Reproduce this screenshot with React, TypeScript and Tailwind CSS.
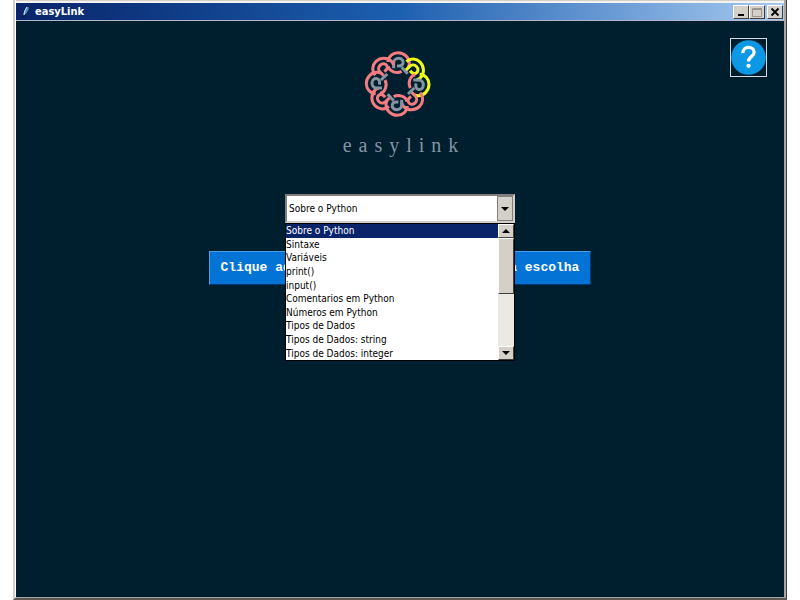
import React, { useState } from "react";

const topics = [
  "Sobre o Python",
  "Sintaxe",
  "Variáveis",
  "print()",
  "input()",
  "Comentarios em Python",
  "Números em Python",
  "Tipos de Dados",
  "Tipos de Dados: string",
  "Tipos de Dados: integer",
];

const PINK = "#f47c80";
const GREY = "#8494a2";
const YELLOW = "#f0fb1c";

// One entry per loop of the knot, clockwise from the top.
const loops = [
  { outer: PINK, hook: GREY, inner: PINK, spoke: GREY },
  { outer: YELLOW, hook: YELLOW, inner: "none", spoke: "none" },
  { outer: YELLOW, hook: GREY, inner: PINK, spoke: GREY },
  { outer: PINK, hook: PINK, inner: "none", spoke: "none" },
  { outer: PINK, hook: GREY, inner: PINK, spoke: GREY },
  { outer: PINK, hook: PINK, inner: "none", spoke: "none" },
  { outer: PINK, hook: GREY, inner: PINK, spoke: GREY },
  { outer: PINK, hook: PINK, inner: "none", spoke: "none" },
];

function KnotLogo() {
  return (
    <svg viewBox="-119 -126 252 252" className="h-[84px] w-[84px]" role="img" aria-label="easylink">
      {loops.map((loop, i) => (
        <g key={i} transform={`rotate(${i * 45})`} fill="none" strokeWidth="9">
          <path d="M-29 -66C-28 -83 -14 -94 1 -94C20 -94 35 -79 35 -62C35 -56 34 -52 31 -48" stroke={loop.outer} />
          <path d="M-12 -47V-63C-12 -72 -5 -77 3 -77C13 -77 18 -69 16 -62C14 -55 8 -53 -2 -55" stroke={loop.hook} />
          <path d="M-28 -53C-25 -37 -3 -30 12 -38" stroke={loop.inner} />
          <path d="M12 -50L30 -31" stroke={loop.spoke} />
        </g>
      ))}
    </svg>
  );
}

function Feather() {
  return (
    <svg viewBox="0 0 16 16" className="h-4 w-4" aria-hidden="true">
      <path d="M5 13C5 8 7 3 11 2C12 5 10 9 7 11Z" fill="#4d8fc4" stroke="#081838" strokeWidth="1" />
      <path d="M6 14V11" fill="none" stroke="#081838" strokeWidth="1" />
      <path d="M6 11C6 8 7 6 9 3" fill="none" stroke="#d8eefc" strokeWidth="1" />
    </svg>
  );
}

const raised =
  "flex items-center justify-center border border-t-white border-l-white border-r-[#404040] border-b-[#404040] bg-[#d4d0c8] text-black";

function Triangle({ up = false }: { up?: boolean }) {
  return (
    <svg viewBox="0 0 8 4" className="h-1 w-2" aria-hidden="true">
      <path d={up ? "M0 4L4 0L8 4Z" : "M0 0H8L4 4Z"} fill="#000" />
    </svg>
  );
}

function TitleBar() {
  return (
    <header className="flex h-[18px] items-center justify-between border-b border-[#b4b8cc] bg-linear-to-r from-[#0a246a] via-[#1c60b0] to-[#a6caf0] pr-px pl-0.5">
      <div className="flex items-center gap-px">
        <Feather />
        <h1 className="font-['DejaVu_Sans_Condensed','DejaVu_Sans',sans-serif] text-[11px] leading-4 font-bold text-white">
          easyLink
        </h1>
      </div>
      <div className="flex">
        <button aria-label="Minimizar" className={`${raised} h-3.5 w-4`}>
          <svg viewBox="0 0 12 12" className="h-3 w-3"><path d="M3 9H9" stroke="#000" strokeWidth="2" /></svg>
        </button>
        <button aria-label="Maximizar" disabled className={`${raised} h-3.5 w-4`}>
          <svg viewBox="0 0 12 12" className="h-3 w-3">
            <path d="M1.5 2.5H10.5V10.5H1.5Z M2 3.5H10" fill="none" stroke="#99968f" />
          </svg>
        </button>
        <button aria-label="Fechar" className={`${raised} ml-0.5 h-3.5 w-4`}>
          <svg viewBox="0 0 12 12" className="h-3 w-3">
            <path d="M2.5 2.5L9.5 9.5M9.5 2.5L2.5 9.5" stroke="#000" strokeWidth="1.8" />
          </svg>
        </button>
      </div>
    </header>
  );
}

function TopicPicker() {
  const [topic, setTopic] = useState(topics[0]);
  return (
    <div className="relative z-10 w-[230px] font-['DejaVu_Sans_Condensed','DejaVu_Sans',sans-serif] text-[10px] text-black">
      <div className="flex h-[29px] border-2 border-t-[#808080] border-r-[#d4d0c8] border-b-[#d4d0c8] border-l-[#808080] bg-white">
        <select
          aria-label="Tópico"
          value={topic}
          onChange={(e) => setTopic(e.target.value)}
          className="min-w-0 flex-1 appearance-none bg-white pl-0.5 outline-none"
        >
          {topics.map((t) => (
            <option key={t}>{t}</option>
          ))}
        </select>
        <button aria-label="Abrir lista" className="flex w-4 items-center justify-center border border-[#808080] bg-[#d4d0c8]">
          <Triangle />
        </button>
      </div>
      <div className="absolute top-full left-0 flex h-[138px] w-full border border-black bg-white">
        <ul role="listbox" aria-label="Tópicos" className="grid flex-1 grid-rows-10">
          {topics.map((t) => (
            <li
              key={t}
              role="option"
              aria-selected={t === topic}
              onClick={() => setTopic(t)}
              className="flex min-h-0 cursor-default items-center leading-[13px] aria-selected:bg-[#0a246a] aria-selected:text-white"
            >
              {t}
            </li>
          ))}
        </ul>
        <div className="flex w-4 flex-col bg-[#ebe9e4]">
          <button aria-label="Rolar para cima" className={`${raised} h-3.5`}>
            <Triangle up />
          </button>
          <div className={`${raised} h-14`} />
          <button aria-label="Rolar para baixo" className={`${raised} mt-auto h-3.5`}>
            <Triangle />
          </button>
        </div>
      </div>
    </div>
  );
}

export default function App() {
  return (
    <div className="flex min-h-screen bg-white px-[13px]">
      <div className="flex flex-1 border-r border-b-2 border-l-2 border-r-[#404040] border-b-[#5c5854] border-l-[#d4d0c8]">
        <div className="flex flex-1 flex-col border border-t-0 border-r-2 border-r-[#a8a5a0] border-b-[#a8a5a0] border-l-white bg-[#001f2e]">
          <div className="h-[3px] border-t border-[#d4d0c8] bg-[#f4f3f0]" />
          <TitleBar />
          <main className="relative flex flex-1 flex-col items-center pt-[21px]">
            <button
              aria-label="Ajuda"
              className="absolute top-[17px] right-[17px] flex h-[39px] w-[37px] items-center justify-center border border-[#d5dde2]"
            >
              <svg viewBox="0 0 36 36" className="h-[37px] w-[35px]" aria-hidden="true">
                <circle cx="18" cy="18" r="17.8" fill="#0c98e4" />
                <path
                  d="M12.2 13.5C12 5.8 23.8 5.7 23.8 12.7C23.8 17.2 18 17 18 22"
                  fill="none"
                  stroke="#fff"
                  strokeWidth="3.4"
                />
                <circle cx="18" cy="26.5" r="2.2" fill="#fff" />
              </svg>
            </button>
            <KnotLogo />
            <p className="mt-[7px] pl-2 font-['Liberation_Serif',serif] text-xl leading-6 tracking-[7px] text-[#8494a2]">
              easylink
            </p>
            <div className="mt-[37px]">
              <TopicPicker />
            </div>
            <button className="mt-7 h-[34px] border border-t-[#4a9be8] border-r-[#003a70] border-b-[#003a70] border-l-[#4a9be8] bg-[#0374d6] px-[11px] font-['Liberation_Mono',monospace] text-[13px] leading-4 font-bold whitespace-nowrap text-white">
              Clique aqui para acessar o link da sua escolha
            </button>
          </main>
        </div>
      </div>
    </div>
  );
}
